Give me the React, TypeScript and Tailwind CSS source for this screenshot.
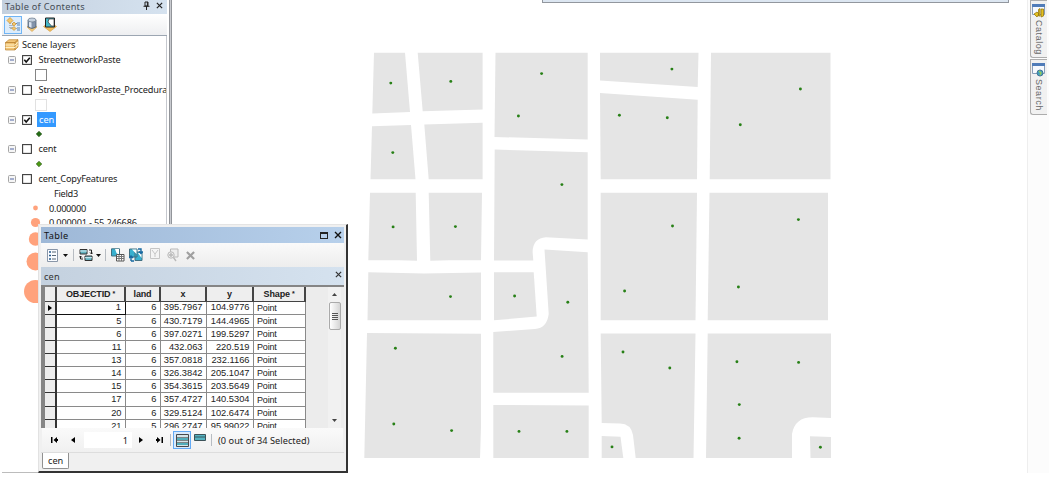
import type { ReactNode } from "react";

const blocks = [
  "M374 52.7H405L410 112L372.3 113.5Z",
  "M417.7 52.7H482.6V109.5L422.7 111.3Z",
  "M372 126.3L411 125L415.5 179.3H370.5Z",
  "M424.3 124.5L482.6 122.7V179.3H428.7Z",
  "M370 192.7H415.7L417 260.8L399 260.2H368.3Z",
  "M428.7 192.7H482L481 260.2H449L430.3 260.8Z",
  "M495.5 52.7H587.7V139.5L494.5 137Z",
  "M494.7 149.5L587.7 152.2V239.5L546 237.3Q533 238 532.6 252L533.3 260.5H494Z",
  "M368.3 272.3L424 273.6L481 272.5V320.3H367.5Z",
  "M494 272.3H533.7L536.7 316.5L494 320.3Z",
  "M544.5 249.5L587.7 252.3L588.7 392.7H493.3V332L535 329Q547 328 548.7 314Z",
  "M367 333L481 333.8V427L480 458H364.3Z",
  "M493.3 405L588.7 405.6V458H493.3Z",
  "M600 52.7H698.5L697.7 87L600 80.5Z",
  "M600 93L697.7 99.8L697 179.3H600.7Z",
  "M711 52.7H830.5V179.3H709.7Z",
  "M600.7 192.7H697L695.5 320.3H600.7Z",
  "M709.5 192.7H828V320.3H707.7Z",
  "M600.7 333.5H695.5L693.5 458H635.7L633 435Q631 424 620 423.6L601.7 423Z",
  "M601.7 436L620.5 436.7L623.3 458H601.7Z",
  "M707.7 333.5H831V418L813 417.3Q795 417 792 434V458H706Z",
  "M810 436.3L831 437V458H810.5Z",
];

const points = [
  [390.8, 83.1], [450.8, 81.4], [541.6, 73.6], [518.4, 116], [392.8, 152.6], [561.9, 184.6],
  [393.1, 226.9], [455.4, 226.6], [671.9, 69.1], [619.4, 115.3], [667.3, 117.8], [800.4, 89],
  [740.3, 124.8], [672.5, 226], [798.4, 219.6], [450.5, 296.6], [514.6, 296], [567.8, 302.3],
  [395.4, 348.3], [562.1, 356.4], [393.8, 424], [451.6, 430.6], [519, 431.4], [566.9, 431.4],
  [624.6, 291], [738.4, 287], [623, 352], [669.8, 368], [736.9, 361.7], [798.6, 362.4],
  [739.3, 404.6], [739.1, 438.3], [612, 446.9], [820.4, 447.2],
];

const rows = [
  ["1", "6", "395.7967", "104.9776"],
  ["5", "6", "430.7179", "144.4965"],
  ["6", "6", "397.0271", "199.5297"],
  ["11", "6", "432.063", "220.519"],
  ["13", "6", "357.0818", "232.1166"],
  ["14", "6", "326.3842", "205.1047"],
  ["15", "6", "354.3615", "203.5649"],
  ["17", "6", "357.4727", "140.5304"],
  ["20", "6", "329.5124", "102.6474"],
  ["21", "5", "296.2747", "95.99022"],
];

function Cross({ size = 8 }: { size?: number }) {
  return (
    <svg width={size} height={size} viewBox="0 0 8 8" stroke="currentColor" strokeWidth="1.4">
      <path d="M1 1L7 7M7 1L1 7" />
    </svg>
  );
}

function Expander() {
  return (
    <svg className="shrink-0" width="8" height="8" viewBox="0 0 8 8">
      <rect x=".5" y=".5" width="7" height="7" rx="1" fill="#f6f6f6" stroke="#a5a5a5" />
      <path d="M2 4H6" stroke="#5267a5" />
    </svg>
  );
}

function Check({ on }: { on?: boolean }) {
  return (
    <svg className="ml-1.5 shrink-0" width="10" height="10" viewBox="0 0 10 10" fill="none">
      <rect x=".6" y=".6" width="8.8" height="8.8" fill="#fff" stroke="#3c3c3c" strokeWidth="1.1" />
      {on && <path d="M2.3 4.7L4.2 6.9L7.8 2.7" stroke="#111" strokeWidth="1.6" />}
    </svg>
  );
}

function Layer({ name, on, selected }: { name: string; on?: boolean; selected?: boolean }) {
  return (
    <div className="flex h-[15px] items-center pl-[6px]">
      <Expander />
      <Check on={on} />
      <span
        className={
          selected
            ? "ml-[5px] flex h-[15px] items-center bg-[#3399ff] pb-px pl-[2px] pr-[2px] text-white"
            : "ml-[6.5px] flex h-[15px] items-center pb-px tracking-[-0.018em]"
        }
      >
        {name}
      </span>
    </div>
  );
}

function Diamond({ color }: { color: string }) {
  return (
    <div className="flex h-[14.7px] items-center pl-[34px]">
      <svg width="6" height="6" viewBox="0 0 6 6">
        <path d="M3 .2L5.8 3L3 5.8L.2 3Z" fill={color} stroke="#28521a" strokeWidth=".6" />
      </svg>
    </div>
  );
}

function ClassRow({ r, h, children }: { r: number; h: string; children?: ReactNode }) {
  return (
    <div className={"flex items-center " + h}>
      <svg className="ml-[17px] shrink-0" width="32" height="100%" overflow="visible">
        <circle cx="16.5" cy="50%" r={r} fill="#ffa27c" />
      </svg>
      <span className="-ml-[2px]">{children}</span>
    </div>
  );
}

function Contents() {
  return (
    <aside className="flex w-[172px] shrink-0 flex-col pl-[2px]">
      <div className="flex min-h-0 flex-1">
        <div className="flex w-[165px] flex-col">
          <header className="flex h-[14px] items-center bg-gradient-to-r from-[#c3d0df] to-[#d5e2ef] pl-[3px] text-[#454c55]">
            <span className="-mt-[1px] tracking-[0.03em]">Table of Contents</span>
            <svg className="ml-auto mr-[6px] -mt-[4px]" width="7" height="9" viewBox="0 0 7 9" fill="none" stroke="#222">
              <path d="M2 1H5V5H2ZM.5 5.3H6.5M3.5 5V9M4.4 1V5" />
            </svg>
            <span className="-mt-[3px] mr-[4px] text-[#222]"><Cross size={7} /></span>
          </header>
          <div className="flex h-[22px] items-center gap-[5px] border-b border-[#9ca6b2] bg-gradient-to-b from-white to-[#eeeff1] pl-[2px]">
            <span className="flex h-[18px] w-[18px] items-center justify-center border border-[#70b5f5] bg-[#dcecfb]">
              <svg width="15" height="15" viewBox="0 0 15 15">
                <path d="M4 4V11.5H11M6 6.5H11M6 11V8" fill="none" stroke="#818181" strokeDasharray="1 1" />
                <path d="M4 .5L7 3.5L4 6.5L1 3.5ZM8 5L10 7L8 9L6 7ZM8 9.5L10 11.5L8 13.5L6 11.5Z" fill="#f3c76d" stroke="#cb9131" strokeWidth=".7" />
                <path d="M11 6H14M11 8H14M11 11H14M11 13H14" stroke="#5282b7" />
              </svg>
            </span>
            <svg className="-ml-px" width="12" height="15" viewBox="0 0 12 15">
              <path d="M1 10L6 14.5L11 10L6 7Z" fill="#f0c778" stroke="#d5a14b" strokeWidth=".6" />
              <path d="M2 3V10Q6 13 10 10V3Z" fill="#8293aa" stroke="#445567" strokeWidth=".7" />
              <path d="M3 3V9.5Q4 10.5 5.5 10.7V3Z" fill="#dce5f1" />
              <ellipse cx="6" cy="3" rx="4" ry="2" fill="#c5d1df" stroke="#657587" strokeWidth=".7" />
            </svg>
            <svg width="14" height="15" viewBox="0 0 14 15">
              <path d="M.5 9.5L7 14.5L13.5 9.5L10 7H4Z" fill="#f0bd5d" stroke="#d39431" strokeWidth=".6" />
              <path d="M2.5 1H11.5V10H2.5Z" fill="#45b8c9" stroke="#222" />
              <path d="M6 2H11V9H8.5L5 5Z" fill="#fff" stroke="#333" strokeWidth=".7" />
            </svg>
          </div>
          <div className="min-h-0 flex-1 overflow-hidden whitespace-nowrap border-r border-[#c5c8ce] text-[#222]">
            <div className="flex h-[16px] items-center pl-[3px] pt-px">
              <svg width="14" height="12" viewBox="0 0 14 12">
                <path d="M.5 3.5L4 .7H13L10 3.5ZM.5 3.5H10V11H.5ZM10 3.5L13 .7V8L10 11Z" fill="#f2c577" stroke="#bd8637" strokeWidth=".7" />
                <path d="M.5 6H10L13 3.3M.5 8.5H10L13 5.8" fill="none" stroke="#fff0c5" />
              </svg>
              <span className="ml-[3px]">Scene layers</span>
            </div>
            <Layer name="StreetnetworkPaste" on />
            <div className="flex h-[15px] items-center pl-[33px]"><span className="h-[12px] w-[12px] border border-[#858585]" /></div>
            <Layer name="StreetnetworkPaste_Procedural" />
            <div className="flex h-[15px] items-center pl-[33px]"><span className="h-[12px] w-[12px] border border-[#e1e1e1]" /></div>
            <Layer name="cen" on selected />
            <Diamond color="#236c15" />
            <Layer name="cent" />
            <Diamond color="#4c9913" />
            <Layer name="cent_CopyFeatures" />
            <div className="flex h-[15px] items-center pb-px pl-[52px] tracking-[-0.03em]">Field3</div>
            <ClassRow r={2.4} h="h-[14px]"><span className="tracking-[-0.03em]">0.000000</span></ClassRow>
            <ClassRow r={4.6} h="h-[15px]"><span className="tracking-[-0.02em]">0.000001 - 55.246686</span></ClassRow>
            <ClassRow r={6.7} h="h-[18px]" />
            <ClassRow r={9} h="h-[27px]" />
            <ClassRow r={11.5} h="h-[33px]" />
          </div>
        </div>
        <div className="ml-[2px] w-[3px] border-x border-x-[#92959a] bg-[#c9cbd0]" />
      </div>
      <div className="h-[7px] border-t border-[#bcbcbc]" />
    </aside>
  );
}

function Divider() {
  return <span className="h-[12px] w-px shrink-0 bg-[#b7bcc2]" />;
}

function Caret() {
  return <svg width="5" height="3" viewBox="0 0 5 3"><path d="M0 0H5L2.5 3Z" fill="#111" /></svg>;
}

function TableTools() {
  return (
    <div className="flex h-[24px] shrink-0 items-center bg-gradient-to-b from-[#fafafa] to-[#ededed] pl-[6px]">
      <svg width="11" height="13" viewBox="0 0 11 13">
        <path d="M.5 .5H10.5V12.5H.5Z" fill="#fafcff" stroke="#8996a8" />
        <path d="M2 3H4M2 6.5H4M2 10H4" stroke="#26598d" strokeWidth="1.3" />
        <path d="M5 3H9M5 6.5H9M5 10H9" stroke="#596775" />
      </svg>
      <span className="ml-[5px] mr-[5px]"><Caret /></span>
      <Divider />
      <svg className="ml-[5px]" width="14" height="14" viewBox="0 0 14 14">
        <path d="M1 1.5H8V6H1ZM6 8H13V12.5H6Z" fill="#62b5c2" stroke="#333" />
        <path d="M1 3H8M6 9.7H13" stroke="#d7eef4" />
        <path d="M10 2H12.5V6M11 4.5L12.5 6L14 4.5M4 11H1.5V8M0 9.5L1.5 8L3 9.5" fill="none" stroke="#222" />
      </svg>
      <span className="ml-[3px] mr-[4px]"><Caret /></span>
      <Divider />
      <svg className="ml-[5px]" width="14" height="14" viewBox="0 0 14 14">
        <path d="M.5 .8H8.5V8H.5Z" fill="#38b0cf" stroke="#417082" />
        <path d="M4 1H8V7L5.5 5Z" fill="#fff" />
        <path d="M5.5 6.5H13V13H5.5Z" fill="#fff" stroke="#555" />
        <path d="M6 8.5H13M6 10.5H13M8 7V13M10.5 7V13" stroke="#777" />
      </svg>
      <svg className="ml-[4px]" width="14" height="14" viewBox="0 0 14 14">
        <path d="M.5 1H8V9H.5ZM6 4H13V12.5H6Z" fill="#38b0cf" stroke="#417082" />
        <path d="M3 1.5H7.5V6ZM9 5H12.5V10Z" fill="#fff" />
        <path d="M2 13V8M0 10L2 8L4 10M2 13H5M9 1H12V5M10 3.5L12 5.5L14 3.5" fill="none" stroke="#1769a1" strokeWidth="1.4" />
      </svg>
      <svg className="ml-[7px] -mt-[4px]" width="10" height="11" viewBox="0 0 10 11" fill="#f4f4f4" stroke="#c5c5c5">
        <path d="M.5 .5H9.5V10.5H.5ZM2 2L5 6L8 2M5 6V9" />
      </svg>
      <svg className="ml-[6px]" width="13" height="14" viewBox="0 0 13 14" fill="#eee" stroke="#b9b9b9">
        <path d="M4.5 1H12V9H4.5Z" /><circle cx="5" cy="7" r="3.2" /><path d="M5 5V9M3 7H7M7.5 9.5L10 13" strokeWidth="1.4" />
      </svg>
      <svg className="ml-[7px]" width="9" height="9" viewBox="0 0 10 10" stroke="#a0a0a0" strokeWidth="2.4"><path d="M1 1L9 9M9 1L1 9" /></svg>
    </div>
  );
}

const columns = "grid grid-cols-[12px_69px_35px_46px_47px_52px] grid-rows-[100%] leading-none";

function Records() {
  return (
    <div className="flex h-[143px] shrink-0 border-l-4 border-t-2 border-l-[#858585] border-t-[#858585] bg-[#ececec] font-['Liberation_Sans',sans-serif] text-[9.3px] text-[#222]">
      <div className="h-full w-[261px] shrink-0 overflow-hidden">
        <div className={columns + " h-[14.5px] text-center text-[9px] font-bold tracking-[-0.015em]"}>
          {["", "OBJECTID", "land", "x", "y", "Shape"].map((h, i) => (
            <span key={i} className="flex items-center justify-center border-b border-r-2 border-[#444] bg-[#eeeeee] pt-px">
              {h}
              {(i === 1 || i === 5) && <span className="-mt-[2px] ml-[2px] text-[7px]">*</span>}
            </span>
          ))}
        </div>
        {rows.map((row, index) => (
          <div key={row[0]} className={columns + " h-[13.15px] text-right"}>
            <span className="flex items-center justify-center border-b border-r-2 border-[#333] bg-[#ededed]">
              {index === 0 && <svg width="4" height="6" viewBox="0 0 4 6"><path d="M0 0L4 3L0 6Z" /></svg>}
            </span>
            {row.map((value, i) => (
              <span
                key={i}
                className={
                  index === 0 && i === 0
                    ? "flex items-center justify-end border-b border-r border-[#111] bg-white pr-[4px] pt-px"
                    : "flex items-center justify-end border-b border-r border-[#8a8a8a] bg-white pr-[3.5px] pt-px"
                }
              >
                {value}
              </span>
            ))}
            <span className="flex items-center border-b border-r border-[#8a8a8a] bg-white pl-[3px] pt-px text-[9px] tracking-[-0.02em]">Point</span>
          </div>
        ))}
      </div>
      <div className="ml-auto mr-[3px] flex w-[13px] flex-col items-center bg-[#f1f1f1]">
        <svg className="mt-[6px]" width="5" height="3" viewBox="0 0 5 3"><path d="M0 3H5L2.5 0Z" fill="#444" /></svg>
        <div className="mt-[6px] flex h-[28px] w-[12px] flex-col items-center justify-center gap-px rounded-[2px] border border-[#aaa] bg-gradient-to-r from-white to-[#d5d5d5]">
          <i className="h-px w-[6px] bg-[#555]" /><i className="h-px w-[6px] bg-[#555]" /><i className="h-px w-[6px] bg-[#555]" /><i className="h-px w-[6px] bg-[#555]" />
        </div>
        <svg className="mt-auto mb-[6px]" width="5" height="3" viewBox="0 0 5 3"><path d="M0 0H5L2.5 3Z" fill="#444" /></svg>
      </div>
    </div>
  );
}

function TableWindow() {
  return (
    <section className="absolute left-[38px] top-[224px] flex h-[249px] w-[310px] flex-col border-b-2 border-l border-r-2 border-t border-b-[#333] border-l-[#e2e2e2] border-r-[#333] border-t-[#e4e4e4] bg-[#f0f0f0] pl-[2px] pr-[2px] pt-[2px]">
      <header className="flex h-[16px] shrink-0 items-center bg-gradient-to-r from-[#9eb8d7] to-[#b7d0eb] pl-[3px] tracking-[0.04em] text-[#111]">
        Table
        <span className="ml-auto h-[7px] w-[8px] border border-t-2 border-[#222]" />
        <span className="ml-[6px] mr-[2px]"><Cross /></span>
      </header>
      <TableTools />
      <div className="flex h-[18px] shrink-0 items-center bg-gradient-to-r from-[#c4d1df] to-[#d5e2ef] pl-[3px] tracking-[0.02em] text-[#333]">
        cen<span className="ml-auto mr-[2px] -mt-[3px]"><Cross size={7} /></span>
      </div>
      <Records />
      <div className="mx-px flex h-[24px] shrink-0 items-center bg-gradient-to-b from-[#fafafa] to-[#f0f0f0] text-[#222]">
        <svg className="ml-[9px] shrink-0" width="8" height="6" viewBox="0 0 8 6"><path d="M0 0H1.5V6H0ZM6 0V6L2.5 3ZM6 2H7V4H6Z" /></svg>
        <svg className="ml-[12px] shrink-0" width="4" height="6" viewBox="0 0 4 6"><path d="M4 0V6L0 3Z" /></svg>
        <span className="ml-[9px] flex h-[16px] w-[48px] items-center justify-end bg-white pr-[4px]">1</span>
        <svg className="ml-[7px] shrink-0" width="4" height="6" viewBox="0 0 4 6"><path d="M0 0V6L4 3Z" /></svg>
        <svg className="mr-[7px] ml-[12px] shrink-0" width="8" height="6" viewBox="0 0 8 6"><path d="M6.5 0H8V6H6.5ZM2 0V6L5.5 3ZM1 2H2V4H1Z" /></svg>
        <Divider />
        <span className="ml-[2px] flex h-[18px] w-[18px] shrink-0 items-center justify-center border border-[#62aaf5] bg-[#d8eafb]">
          <svg width="13" height="13" viewBox="0 0 13 13"><path d="M.5 .5H12.5V12.5H.5Z" fill="#d3e5e9" stroke="#46494b" /><path d="M1 5H12M1 10H12" stroke="#50aebb" strokeWidth="2" /><path d="M1 3.5H12M1 6.5H12M1 8.5H12" stroke="#565b5e" strokeWidth=".7" /></svg>
        </span>
        <svg className="ml-[3px] mr-[5px] -mt-[5px] shrink-0" width="12" height="7" viewBox="0 0 12 7"><path d="M.5 .5H11.5V6.5H.5Z" fill="#55b3c1" stroke="#3c5259" /><path d="M1 3H11" stroke="#375860" /></svg>
        <Divider />
        <span className="ml-[6px] whitespace-nowrap tracking-[0.005em]">(0 out of 34 Selected)</span>
      </div>
      <div className="flex min-h-0 flex-1 border-t border-[#ddd]">
        <span className="ml-px flex h-[16px] w-[27px] items-center rounded-b-[2px] border border-t-0 border-[#919191] bg-white pl-[5px] text-[#222]">cen</span>
      </div>
    </section>
  );
}

function DockTab({ name, globe }: { name: string; globe?: boolean }) {
  return (
    <div className="flex flex-col items-center rounded-bl-[3px] border border-r-0 border-[#adadad] bg-[#f1f1f1] pt-[3px] [&:first-child]:h-[58px] [&:last-child]:h-[56px]">
      <svg className="-ml-[2px] shrink-0" width="13" height="14" viewBox="0 0 13 14">
        <path d="M.5 .5H12.5V10.5H.5Z" fill="#f6f9fe" stroke="#889eb9" />
        <path d="M0 0H13V3H0Z" fill="#507cb9" />
        {globe ? (
          <g><circle cx="8" cy="10" r="3" fill="#3e9fc2" stroke="#467595" /><path d="M7 8L9 10L8 12" stroke="#94c95b" strokeWidth="1.5" fill="none" /></g>
        ) : (
          <path d="M6.5 5.5L8 4.5V12H6.5ZM9 5H11.5V12L9 13ZM2 10L5 8L7 10L5 13Z" fill="#e3c11e" stroke="#987911" strokeWidth=".8" />
        )}
      </svg>
      <span className={"mt-[2px] -ml-[2px] font-['Liberation_Sans',sans-serif] text-[9px] leading-[11px] text-[#686868] [writing-mode:vertical-rl] tracking-[.06em]"}>{name}</span>
    </div>
  );
}

export default function App() {
  return (
    <div className="relative flex h-[479px] w-[1049px] overflow-hidden bg-white font-['Noto_Sans',sans-serif] text-[9.2px] leading-[13px]">
      <Contents />
      <main className="min-w-0 flex-1">
        <svg width="855" height="479" viewBox="172 0 855 479">
          {blocks.map((d) => <path key={d} d={d} fill="#e5e5e5" />)}
          {points.map(([x, y]) => <circle key={`${x}-${y}`} cx={x} cy={y} r="1.45" fill="#278016" />)}
        </svg>
      </main>
      <nav className="flex w-[22px] shrink-0 flex-col pb-[6px]">
        <div className="flex flex-1 flex-col border-l border-[#eee] bg-[#fcfcfc] pl-[2px]">
          <div className="flex w-[17px] flex-col gap-px">
            <DockTab name="Catalog" />
            <DockTab name="Search" globe />
          </div>
        </div>
      </nav>
      <div className="absolute left-[542px] top-0 h-[3px] w-[467px] border-x border-b border-[#92979e] bg-[#dce6f1]" />
      <TableWindow />
    </div>
  );
}
